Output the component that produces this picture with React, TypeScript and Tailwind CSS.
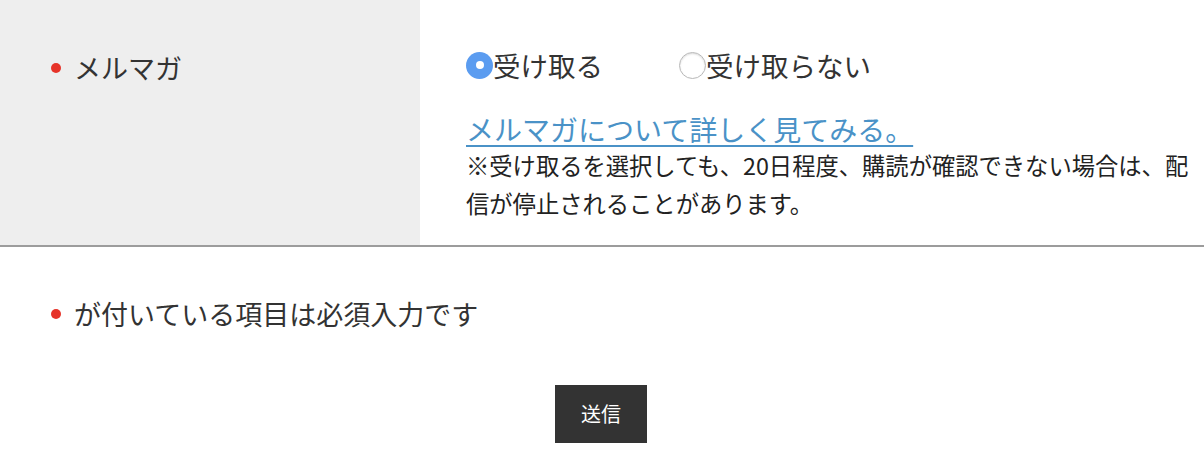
import { useState } from 'react';

const font = "font-['Noto_Sans_CJK_JP','Noto_Sans',sans-serif]";

function RequiredDot() {
  return <span className="inline-block w-[10px] h-[10px] rounded-full bg-[#e63329] mr-[13px] shrink-0" />;
}

function Radio({ checked, label, onClick }: { checked: boolean; label: string; onClick: () => void }) {
  return (
    <label className="flex items-center cursor-pointer" onClick={onClick}>
      {checked ? (
        <span className="w-[27px] h-[27px] rounded-full bg-[#5b9cf0] flex items-center justify-center shrink-0">
          <span className="w-[8px] h-[8px] rounded-full bg-white" />
        </span>
      ) : (
        <span className="w-[27px] h-[27px] rounded-full bg-white border border-[#b8b8b8] shadow-[inset_0_1px_2px_rgba(0,0,0,0.15)] shrink-0" />
      )}
      <span>{label}</span>
    </label>
  );
}

export default function App() {
  const [subscribe, setSubscribe] = useState(true);

  return (
    <div className={`${font} w-[1204px] h-[452px] bg-white text-[#333] overflow-hidden`}>
      <div className="flex border-b-2 border-[#9c9c9c]">
        <div className="w-[420px] bg-[#eeeeee] pl-[51px] pt-[48px] shrink-0">
          <div className="flex items-center text-[27px] leading-[40px]">
            <RequiredDot />
            <span>メルマガ</span>
          </div>
        </div>
        <div className="flex-1 pl-[46px] pr-[6px] pt-[45px] pb-[23px]">
          <div className="flex items-center gap-[76px] text-[27.5px] leading-[40px]">
            <Radio checked={subscribe} label="受け取る" onClick={() => setSubscribe(true)} />
            <Radio checked={!subscribe} label="受け取らない" onClick={() => setSubscribe(false)} />
          </div>
          <a
            href="#"
            className="inline-block mt-[28px] text-[28px] leading-[32px] text-[#4a92c7] underline decoration-2 underline-offset-[4px]"
          >
            メルマガについて詳しく見てみる。
          </a>
          <p className="text-[23.3px] leading-[38px] text-[#222]">
            ※受け取るを選択しても、20日程度、購読が確認できない場合は、配信が停止されることがあります。
          </p>
        </div>
      </div>

      <div className="pl-[51px] pt-[47px] flex items-center text-[27px] leading-[40px]">
        <RequiredDot />
        <span>が付いている項目は必須入力です</span>
      </div>

      <div className="flex justify-center pt-[51px]">
        <button className="w-[92px] h-[58px] bg-[#333333] text-white text-[20px] mr-[2px]">送信</button>
      </div>
    </div>
  );
}
